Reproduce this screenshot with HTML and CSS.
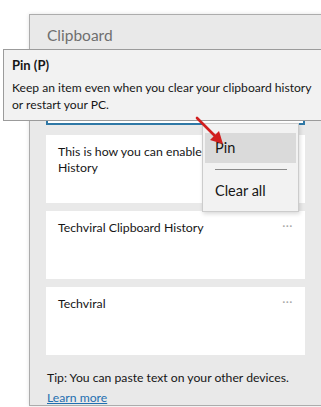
FILE: index.html
```html
<!DOCTYPE html>
<html>
<head>
<meta charset="utf-8">
<link rel="stylesheet" href="styles.css">
</head>
<body>
<div class="stage">
  <div class="panel">
    <div class="title">Clipboard</div>
    <div class="cards">
      <div class="card selected"></div>
      <div class="card"><div class="text">This is how you can enable<br>History</div><span class="dots">···</span></div>
      <div class="card"><div class="text">Techviral Clipboard History</div><span class="dots">···</span></div>
      <div class="card"><div class="text">Techviral</div><span class="dots">···</span></div>
    </div>
    <div class="tip">Tip: You can paste text on your other devices.</div>
    <a class="learn">Learn more</a>
  </div>

  <div class="tooltip">
    <div class="tt-title">Pin (P)</div>
    <div class="tt-body">Keep an item even when you clear your clipboard history<br>or restart your PC.</div>
  </div>

  <div class="menu">
    <div class="menu-item active">Pin</div>
    <div class="sep"></div>
    <div class="menu-item">Clear all</div>
  </div>

  <svg class="arrow" width="40" height="40" viewBox="0 0 40 40">
    <line x1="2" y1="2" x2="22" y2="22" stroke="#d11f1f" stroke-width="2.6" stroke-linecap="round"/>
    <polygon points="28,28 15,24 24,15" fill="#d11f1f"/>
  </svg>
</div>
</body>
</html>
```
FILE: styles.css
```css
html, body {
  margin: 0;
  padding: 0;
  background: #ffffff;
  overflow: hidden;
}
body {
  width: 321px;
  height: 407px;
  font-family: Lato, "Noto Sans", sans-serif;
  color: #1a1a1a;
}
.stage {
  position: relative;
  width: 321px;
  height: 407px;
  padding: 14px 0 0 29px;
  box-sizing: border-box;
  overflow: hidden;
}
.panel {
  width: 310px;
  height: 392px;
  box-sizing: border-box;
  background: #e9e9e9;
  border: 1px solid #acacac;
  box-shadow: 0 0 4px rgba(0,0,0,0.12);
  padding: 0 0 0 16px;
}
.title {
  height: 42px;
  padding-left: 1px;
  font-size: 15.5px;
  line-height: 40px;
  color: #6f6f6f;
}
.cards {
  width: 259px;
  display: flex;
  flex-direction: column;
  gap: 8px;
}
.card {
  position: relative;
  height: 68px;
  box-sizing: border-box;
  background: #ffffff;
  padding: 9px 12px 0 12px;
  font-size: 12.3px;
  line-height: 16px;
  color: #161616;
}
.card.selected {
  border: 2px solid #2f78a6;
  margin-bottom: 2px;
}
.text {
  white-space: nowrap;
}
.dots {
  position: absolute;
  right: 12px;
  top: 7px;
  font-size: 12px;
  letter-spacing: 0.5px;
  color: #a8a8a8;
}
.tip {
  margin-top: 15px;
  padding-left: 1px;
  font-size: 12.2px;
  line-height: 16px;
  color: #161616;
  white-space: nowrap;
}
.learn {
  display: inline-block;
  margin-left: 1px;
  font-size: 12.2px;
  line-height: 15px;
  color: #1f6fb0;
  text-decoration: underline;
}
.tooltip {
  position: absolute;
  left: 3px;
  top: 49px;
  width: 330px;
  height: 72px;
  box-sizing: border-box;
  background: #f2f2f2;
  border: 1px solid #9b9b9b;
  padding: 7px 0 0 8px;
  font-size: 12.1px;
  color: #161616;
}
.tt-title {
  font-size: 13px;
  font-weight: bold;
  line-height: 16px;
}
.tt-body {
  margin-top: 6px;
  line-height: 17px;
  white-space: nowrap;
}
.menu {
  position: absolute;
  left: 202px;
  top: 123px;
  width: 97px;
  height: 89px;
  box-sizing: border-box;
  background: #f2f2f2;
  border: 1px solid #cccccc;
  box-shadow: 1px 2px 4px rgba(0,0,0,0.15);
  padding: 9px 2px 0 2px;
}
.menu-item {
  height: 30px;
  line-height: 30px;
  padding-left: 10px;
  font-size: 14.5px;
  color: #161616;
}
.menu-item.active {
  background: #dadada;
}
.sep {
  height: 1px;
  background: #8a8a8a;
  margin: 6px 9px 6px 10px;
}
.arrow {
  position: absolute;
  left: 195px;
  top: 116px;
}
```
